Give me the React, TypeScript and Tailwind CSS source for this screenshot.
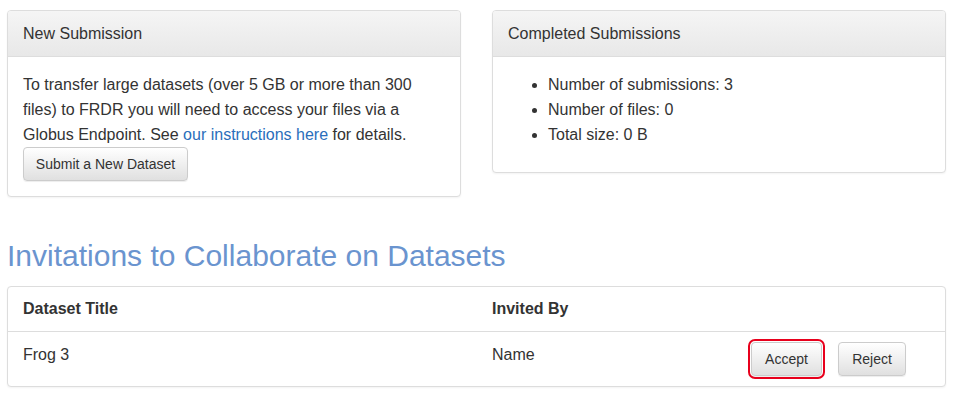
import React from "react";

const panel = "rounded-[4px] border border-[#dddddd] bg-white shadow-[0_1px_2px_rgba(0,0,0,0.05)]";
const panelHead =
  "border-b border-[#dddddd] rounded-t-[3px] bg-gradient-to-b from-[#f5f5f5] to-[#e8e8e8] px-[15px] py-[10px] text-[16px] leading-[25px] text-[#333333]";
const btn =
  "inline-flex items-center justify-center h-[34px] rounded-[4px] border border-[#cccccc] bg-gradient-to-b from-[#ffffff] to-[#e0e0e0] text-[14px] leading-[20px] text-[#333333] shadow-[inset_0_1px_0_rgba(255,255,255,0.15),0_1px_1px_rgba(0,0,0,0.075)]";

const stats = ["Number of submissions: 3", "Number of files: 0", "Total size: 0 B"];

export default function App() {
  return (
    <div className="min-h-[397px] w-[958px] bg-white pl-[7px] pr-[12px] pt-[10px] font-['Liberation_Sans',Arial,sans-serif] text-[16px] leading-[25px] text-[#333333]">
      {/* Top panels */}
      <div className="grid grid-cols-[454px_454px] gap-[31px] items-start">
        <div className={panel}>
          <div className={panelHead}>New Submission</div>
          <div className="p-[15px]">
            <p>
              To transfer large datasets (over 5 GB or more than 300 files) to FRDR you will need to access your files via a
              Globus Endpoint. See <a className="text-[#2a6ebb]">our instructions here</a> for details.
            </p>
            <button className={`${btn} w-[165px]`}>Submit a New Dataset</button>
          </div>
        </div>

        <div className={panel}>
          <div className={panelHead}>Completed Submissions</div>
          <div className="p-[15px]">
            <ul className="mb-[10px] list-disc pl-[40px]">
              {stats.map((s) => (
                <li key={s}>{s}</li>
              ))}
            </ul>
          </div>
        </div>
      </div>

      {/* Invitations */}
      <h2 className="mt-[42px] mb-[14px] text-[30px] leading-[33px] text-[#6a94cf]">Invitations to Collaborate on Datasets</h2>

      <div className={`${panel} w-[939px]`}>
        <div className="grid grid-cols-[469px_259px_1fr] border-b border-[#dddddd] font-bold">
          <div className="px-[15px] pt-[9px] pb-[10px]">Dataset Title</div>
          <div className="px-[15px] pt-[9px] pb-[10px]">Invited By</div>
          <div className="px-[15px] pt-[9px] pb-[10px]"></div>
        </div>
        <div className="grid grid-cols-[469px_259px_1fr]">
          <div className="px-[15px] py-[10px]">Frog 3</div>
          <div className="px-[15px] py-[10px]">Name</div>
          <div className="flex items-start gap-[16px] px-[15px] py-[10px]">
            <button className={`${btn} relative w-[71px]`}>
              Accept
              <span className="pointer-events-none absolute -inset-[4px] rounded-[7px] border-2 border-[#e8001c]" />
            </button>
            <button className={`${btn} w-[68px]`}>Reject</button>
          </div>
        </div>
      </div>
    </div>
  );
}
